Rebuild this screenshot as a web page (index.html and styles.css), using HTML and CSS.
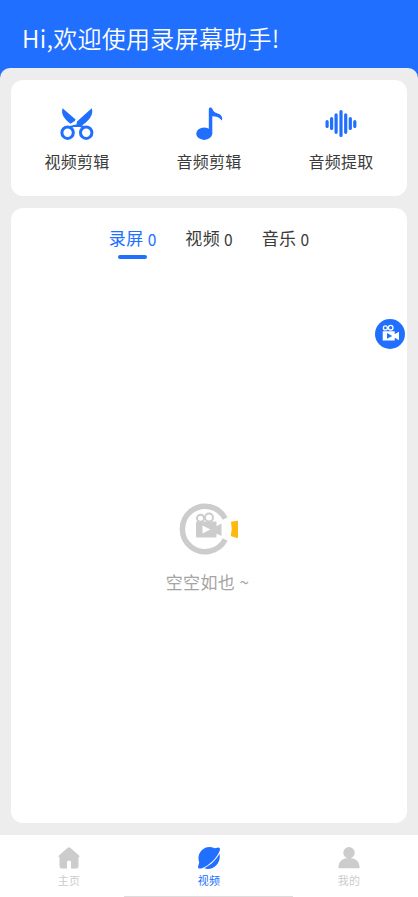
FILE: index.html
```html
<!DOCTYPE html>
<html lang="zh-CN">
<head>
<meta charset="utf-8">
<title>录屏幕助手</title>
<link rel="stylesheet" href="styles.css">
</head>
<body>
<div class="app">
  <header class="header"><h1>Hi,欢迎使用录屏幕助手!</h1></header>
  <main class="content">
    <section class="card tools">
      <div class="tool">
        <svg width="34" height="34" viewBox="0 0 34 34">
          <path fill="#216fff" d="M2.600 1.200 15.600 12.500 14.800 14 10.500 16.800C4.500 12 .5 7 2.600 1.200ZM31.700 1.200C34 7 29.500 13 23.500 17.300L20.500 20 14 20 13.500 18 16.500 17.500 17 14.500Z"/>
          <circle cx="7.600" cy="25.700" r="5.700" fill="none" stroke="#216fff" stroke-width="3"/>
          <circle cx="26.200" cy="25.700" r="5.700" fill="none" stroke="#216fff" stroke-width="3"/>
          <path d="M9 20.300 14 19 20 19 25 20.300" fill="none" stroke="#216fff" stroke-width="2"/>
        </svg>
        <span>视频剪辑</span>
      </div>
      <div class="tool">
        <svg width="34" height="34" viewBox="0 0 34 34">
          <ellipse cx="12.200" cy="26.700" rx="8" ry="6.200" fill="#216fff"/>
          <path fill="#216fff" d="M16.800 27V2.300C16.800-.2 19.800-.2 20.500 2.100 21.500 5.300 24 6 26.500 6.800 29.500 8 31 10.500 29.800 13.500 27.500 10.200 24 9.300 20.300 9.300V27Z"/>
        </svg>
        <span>音频剪辑</span>
      </div>
      <div class="tool">
        <svg width="34" height="34" viewBox="0 0 34 34">
          <path d="M3.100 14.500v5M7.600 11.500v10M12.100 7.800v17.500M17 4.500v24M21.700 7.800v17.500M26.300 11.500v10M30.800 14.500v5" stroke="#216fff" stroke-width="3.200" stroke-linecap="round"/>
        </svg>
        <span>音频提取</span>
      </div>
    </section>
    <section class="card library">
      <nav class="tabs">
        <div class="tab active">录屏<small>0</small></div>
        <div class="tab">视频<small>0</small></div>
        <div class="tab">音乐<small>0</small></div>
      </nav>
      <div class="empty">
        <svg width="60" height="52" viewBox="0 0 60 52">
          <path d="M46.200 15.500A22.700 22.700 0 1 0 46.200 36.500" fill="none" stroke="#ccc" stroke-width="5.500"/>
          <g fill="#ccc"><rect x="17" y="18.500" width="20.500" height="16" rx="1"/><path d="M36 24 42.500 20.500v12.500L36 30z"/></g>
          <circle cx="21.500" cy="15.300" r="3.500" fill="none" stroke="#ccc" stroke-width="2"/>
          <circle cx="30" cy="14.500" r="4" fill="none" stroke="#ccc" stroke-width="2"/>
          <path d="M23.500 22.500v8l8-4z" fill="#fff"/>
          <path d="M52 18.800 58 17.700Q59 17.500 59 18.500V34Q59 35.300 57.800 35L51.800 33Q53.500 26 52 18.800Z" fill="#fdb90e"/>
        </svg>
        <p>空空如也 ~</p>
      </div>
      <div class="recorder">
        <svg width="30" height="30" viewBox="0 0 30 30">
          <path fill="#fff" d="M7.700 12.300h12v9.200h-12zM19.500 15.200 24 12.700v8.600L19.500 18.500z"/>
          <circle cx="10.400" cy="8.900" r="2" fill="none" stroke="#fff" stroke-width="1.300"/>
          <circle cx="15.700" cy="8.700" r="2.300" fill="none" stroke="#fff" stroke-width="1.300"/>
          <path d="M12 14v5.800l5.200-2.900z" fill="#216fff"/>
        </svg>
      </div>
    </section>
  </main>
  <nav class="bottom">
    <div class="item">
      <svg width="24" height="24" viewBox="0 0 24 24"><path fill="#ccc" d="M10.700 1.700Q12 .7 13.300 1.700L22.300 9.700Q23.300 11 21.500 11.200V20Q21.500 22.500 19.500 22.500H14V16Q14 14.500 12 14.500T10 16V22.500H4.500Q2.500 22.500 2.500 20V11.200Q.7 11 1.700 9.700Z"/></svg>
      <span>主页</span>
    </div>
    <div class="item active">
      <svg width="24" height="24" viewBox="0 0 24 24"><path fill="#216fff" d="M17.500 2.300 21.500 1.500Q23.800 1.800 22.500 5.200C19.500 12.500 12 19.500 5 22.200 1.200 23.400.8 21.800 1.200 20L2.200 16.500C-1.300 6 9-2.500 17.500 2.300ZM22.400 7.800C24.800 16.500 16 25.500 7.300 22.300 14 18.800 19.300 13.800 22.400 7.800Z"/></svg>
      <span>视频</span>
    </div>
    <div class="item">
      <svg width="24" height="24" viewBox="0 0 24 24"><g fill="#ccc"><circle cx="12" cy="6.700" r="5.700"/><path d="M1.300 21Q2 12 12 12T22.700 21Q22.700 22.300 21.300 22.300H2.700Q1.300 22.300 1.300 21Z"/></g></svg>
      <span>我的</span>
    </div>
    <div class="home-indicator"></div>
  </nav>
</div>
</body>
</html>
```
FILE: styles.css
```css
* { box-sizing: border-box; }
body {
  margin: 0;
  font-family: "Noto Sans CJK SC", sans-serif;
  color: #3b3b3b;
}
svg { display: block; }
.app {
  height: 897px;
  display: flex;
  flex-direction: column;
  background: #216fff;
  overflow: hidden;
}
.header { height: 68px; padding: 20px 0 0 22px; }
h1 {
  margin: 0;
  font-size: 24px;
  line-height: 36px;
  font-weight: 350;
  letter-spacing: .3px;
  color: #fff;
  white-space: nowrap;
}
.content {
  flex: 1;
  display: flex;
  flex-direction: column;
  gap: 12px;
  padding: 12px 11px;
  background: #ededed;
  border-radius: 10px 10px 0 0;
}
.card { background: #fff; border-radius: 12px; }
.tools { height: 116px; display: flex; }
.tool {
  flex: 1;
  display: flex;
  flex-direction: column;
  align-items: center;
  padding-top: 27px;
  font-size: 16px;
  line-height: 24px;
  letter-spacing: .2px;
}
.tool span { margin-top: 8px; }
.library {
  flex: 1;
  position: relative;
  display: flex;
  flex-direction: column;
}
.tabs { display: flex; justify-content: center; gap: 29px; padding-top: 17px; }
.tab {
  height: 34px;
  font-size: 17px;
  line-height: 26px;
  letter-spacing: .4px;
}
.tab small {
  display: inline-block;
  margin: 2px 0 0 4px;
  font-size: 15.5px;
  line-height: 24px;
  letter-spacing: 0;
  vertical-align: top;
}
.tab.active { color: #216fff; }
.tab.active::after {
  content: "";
  display: block;
  width: 29px;
  height: 4px;
  margin: 4px 0 0 9px;
  border-radius: 2px;
  background: #216fff;
}
.empty { display: flex; flex-direction: column; align-items: center; padding-top: 244px; }
.empty p {
  margin: 13px 0 0;
  padding-right: 3px;
  font-size: 17px;
  line-height: 28px;
  letter-spacing: .4px;
  color: #a5a5a5;
}
.recorder {
  position: absolute;
  right: 2px;
  top: 111px;
  width: 30px;
  height: 30px;
  border-radius: 50%;
  background: #216fff;
}
.bottom {
  position: relative;
  height: 62px;
  display: flex;
  justify-content: center;
  background: #fff;
}
.item {
  flex: 0 0 140px;
  display: flex;
  flex-direction: column;
  align-items: center;
  padding-top: 11px;
  font-size: 11px;
  line-height: 16px;
  letter-spacing: .3px;
  color: #ccc;
}
.item span { margin-top: 2px; }
.item.active { color: #216fff; }
.home-indicator {
  position: absolute;
  left: 124px;
  bottom: 0;
  width: 169px;
  height: 1px;
  background: #ddd;
}
```
